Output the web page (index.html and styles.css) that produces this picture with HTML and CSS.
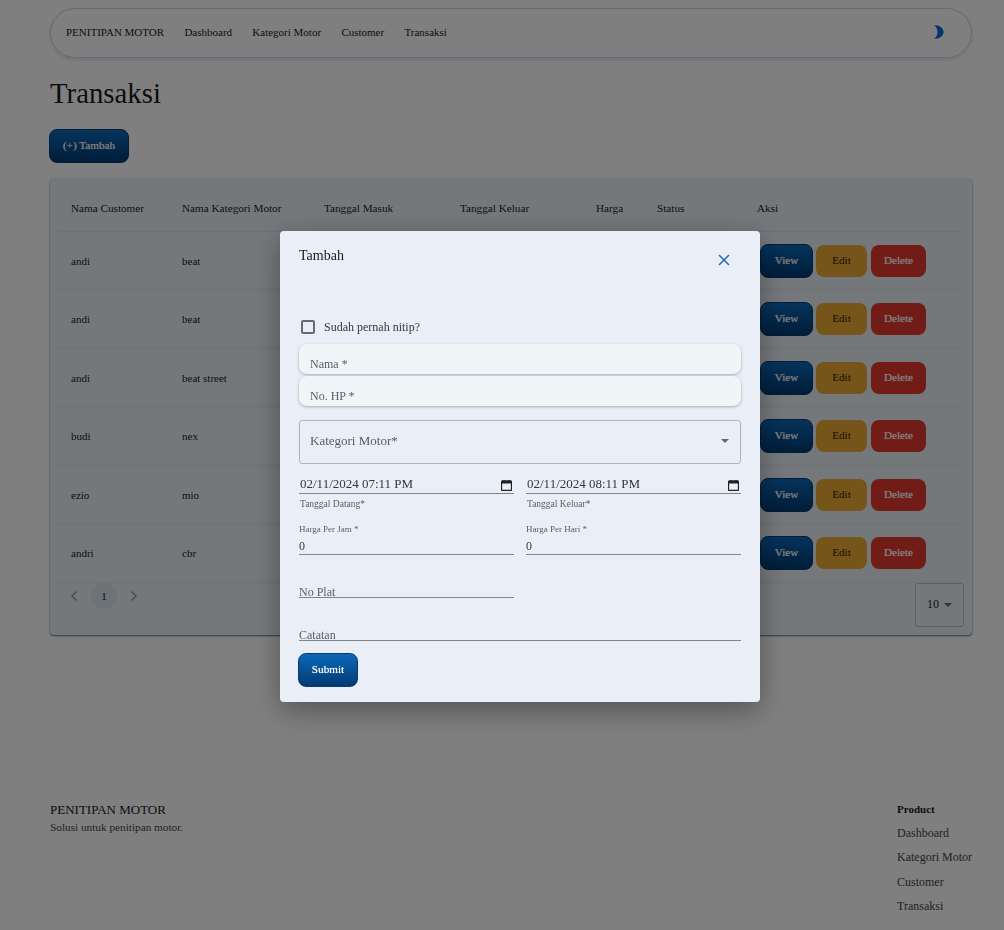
FILE: index.html
```html
<!DOCTYPE html>
<html lang="id">
<head>
    <meta charset="UTF-8">
    <meta name="viewport" content="width=device-width, initial-scale=1.0">
    <link rel="stylesheet" href="styles.css">
    <title>Transaksi</title>
</head>
<body>
    <div class="page">
        <nav class="navbar">
            <a class="nav-link">PENITIPAN MOTOR</a>
            <a class="nav-link">Dashboard</a>
            <a class="nav-link">Kategori Motor</a>
            <a class="nav-link">Customer</a>
            <a class="nav-link">Transaksi</a>
            <svg class="moon" width="10" height="14" viewBox="0 0 10 14"><path d="M0 0C5.500 0 9.500 3 9.500 7S5.500 14 0 14C2.500 12 3.500 9.500 3.500 7S2.500 2 0 0Z"/></svg>
        </nav>

        <h1 class="page-title">Transaksi</h1>
        <button class="btn btn-blue btn-tambah">(+) Tambah</button>

        <section class="table-card">
            <table class="data-table">
                <colgroup>
                    <col class="col-customer">
                    <col class="col-kategori">
                    <col class="col-masuk">
                    <col class="col-keluar">
                    <col class="col-harga">
                    <col class="col-status">
                    <col class="col-aksi">
                </colgroup>
                <thead>
                    <tr>
                        <th>Nama Customer</th>
                        <th>Nama Kategori Motor</th>
                        <th>Tanggal Masuk</th>
                        <th>Tanggal Keluar</th>
                        <th>Harga</th>
                        <th>Status</th>
                        <th>Aksi</th>
                    </tr>
                </thead>
                <tbody>
                    <tr>
                        <td>andi</td><td>beat</td><td></td><td></td><td></td><td></td>
                        <td><div class="actions"><button class="btn btn-blue btn-view">View</button><button class="btn btn-edit">Edit</button><button class="btn btn-delete">Delete</button></div></td>
                    </tr>
                    <tr>
                        <td>andi</td><td>beat</td><td></td><td></td><td></td><td></td>
                        <td><div class="actions"><button class="btn btn-blue btn-view">View</button><button class="btn btn-edit">Edit</button><button class="btn btn-delete">Delete</button></div></td>
                    </tr>
                    <tr>
                        <td>andi</td><td>beat street</td><td></td><td></td><td></td><td></td>
                        <td><div class="actions"><button class="btn btn-blue btn-view">View</button><button class="btn btn-edit">Edit</button><button class="btn btn-delete">Delete</button></div></td>
                    </tr>
                    <tr>
                        <td>budi</td><td>nex</td><td></td><td></td><td></td><td></td>
                        <td><div class="actions"><button class="btn btn-blue btn-view">View</button><button class="btn btn-edit">Edit</button><button class="btn btn-delete">Delete</button></div></td>
                    </tr>
                    <tr>
                        <td>ezio</td><td>mio</td><td></td><td></td><td></td><td></td>
                        <td><div class="actions"><button class="btn btn-blue btn-view">View</button><button class="btn btn-edit">Edit</button><button class="btn btn-delete">Delete</button></div></td>
                    </tr>
                    <tr>
                        <td>andri</td><td>cbr</td><td></td><td></td><td></td><td></td>
                        <td><div class="actions"><button class="btn btn-blue btn-view">View</button><button class="btn btn-edit">Edit</button><button class="btn btn-delete">Delete</button></div></td>
                    </tr>
                </tbody>
            </table>
            <div class="table-footer">
                <div class="pagination">
                    <svg class="chevron" width="8" height="12" viewBox="0 0 8 12"><path d="M6.500 1.500 2 6l4.500 4.500"/></svg>
                    <span class="page-num">1</span>
                    <svg class="chevron" width="8" height="12" viewBox="0 0 8 12"><path d="M1.500 1.500 6 6l-4.500 4.500"/></svg>
                </div>
                <div class="per-page">10 <span class="caret"></span></div>
            </div>
        </section>

        <footer class="footer">
            <div>
                <div class="footer-brand">PENITIPAN MOTOR</div>
                <div class="footer-desc">Solusi untuk penitipan motor.</div>
            </div>
            <div class="footer-links">
                <strong class="footer-head">Product</strong>
                <a>Dashboard</a>
                <a>Kategori Motor</a>
                <a>Customer</a>
                <a>Transaksi</a>
            </div>
        </footer>
    </div>

    <div class="backdrop"></div>

    <div class="modal">
        <div class="modal-head">
            <h2 class="modal-title">Tambah</h2>
            <svg class="close" width="14" height="14" viewBox="0 0 14 14"><path d="M2 2l10 10M12 2 2 12"/></svg>
        </div>

        <label class="check-row"><span class="check-box"></span>Sudah pernah nitip?</label>

        <div class="soft-field">Nama *</div>
        <div class="soft-field">No. HP *</div>

        <div class="select-field">Kategori Motor*<span class="caret"></span></div>

        <div class="form-grid">
            <div>
                <div class="date-input">02/11/2024 07:11 PM
                    <svg class="calendar" width="11" height="11" viewBox="0 0 11 11"><rect class="calendar-top" x="1" y="1" width="9" height="2.500"/><path d="M3 0v1.500M8 0v1.500M1.500 1h8a1 1 0 0 1 1 1v7.500a1 1 0 0 1-1 1h-8a1 1 0 0 1-1-1V2a1 1 0 0 1 1-1Z"/></svg>
                </div>
                <div class="hint">Tanggal Datang*</div>
            </div>
            <div>
                <div class="date-input">02/11/2024 08:11 PM
                    <svg class="calendar" width="11" height="11" viewBox="0 0 11 11"><rect class="calendar-top" x="1" y="1" width="9" height="2.500"/><path d="M3 0v1.500M8 0v1.500M1.500 1h8a1 1 0 0 1 1 1v7.500a1 1 0 0 1-1 1h-8a1 1 0 0 1-1-1V2a1 1 0 0 1 1-1Z"/></svg>
                </div>
                <div class="hint">Tanggal Keluar*</div>
            </div>
            <div class="money">
                <div class="money-label">Harga Per Jam *</div>
                <div class="money-value">0</div>
            </div>
            <div class="money">
                <div class="money-label">Harga Per Hari *</div>
                <div class="money-value">0</div>
            </div>
            <div class="line-field">No Plat</div>
            <div class="line-field line-wide">Catatan</div>
        </div>

        <button class="btn btn-blue btn-submit">Submit</button>
    </div>
</body>
</html>
```

FILE: styles.css
```css
* {
    box-sizing: border-box;
}

html, body {
    height: 930px;
    overflow: hidden;
}

body {
    margin: 0;
    background-color: #ffffff;
    color: #171a1c;
    font-family: "Liberation Serif", "Times New Roman", serif;
    font-size: 12px;
}

.page {
    padding: 8px 32px 0 50px;
}

/* navbar */
.navbar {
    display: flex;
    align-items: center;
    gap: 20.300px;
    height: 50px;
    padding: 0 27px 2px 15px;
    border: 1px solid #c5d4e6;
    border-radius: 25px;
    box-shadow: 0 2px 4px rgba(80, 120, 170, 0.2);
    font-size: 11px;
}

.moon {
    margin-left: auto;
    fill: #0a6cd6;
}

.page-title {
    margin: 19px 0 0;
    font-size: 28.800px;
    font-weight: 400;
    line-height: 32px;
}

/* botoes */
.btn {
    padding: 0 0 2px;
    border: 0;
    border-radius: 8px;
    font-family: inherit;
    font-size: 11.200px;
    font-weight: 400;
    cursor: pointer;
}

.btn-blue {
    height: 34px;
    background-image: linear-gradient(to bottom, #0b68b8, #023a72);
    border: 1px solid #0a3a70;
    color: #ffffff;
    text-shadow: 0 0 1px rgba(255, 255, 255, 0.7);
}

.btn-tambah {
    display: block;
    width: 80px;
    margin: 20px 0 15px -1px;
}

.btn-view {
    width: 53px;
}

.btn-edit {
    width: 51px;
    height: 32px;
    background-color: #ecaa34;
    color: #2a2008;
}

.btn-delete {
    width: 55px;
    height: 32px;
    margin-left: 1px;
    background-color: #e4392f;
    color: #ffffff;
    text-shadow: 0 0 1px rgba(255, 255, 255, 0.7);
}

/* tabela */
.table-card {
    height: 457px;
    padding: 0 8px;
    background-color: #ebf1f6;
    border-radius: 4px;
    box-shadow: 0 1px 2px rgba(0, 0, 0, 0.6);
}

.data-table {
    width: 100%;
    border-collapse: collapse;
    table-layout: fixed;
}

.col-customer { width: 111px; }
.col-kategori { width: 142px; }
.col-masuk { width: 136px; }
.col-keluar { width: 136px; }
.col-harga { width: 61px; }
.col-status { width: 100px; }

.data-table th {
    height: 53px;
    padding: 8px 13px 0;
    font-size: 11.200px;
    font-weight: 400;
    text-align: left;
    border-bottom: 1px solid #dde4ea;
}

.data-table td {
    height: 58.500px;
    padding: 1px 13px 0;
    font-size: 11px;
    border-bottom: 1px solid #dde4ea;
}

.actions {
    display: flex;
    align-items: center;
    gap: 3px;
    margin-left: 3px;
}

.table-footer {
    display: flex;
    justify-content: space-between;
    align-items: flex-start;
}

.pagination {
    display: flex;
    align-items: center;
    gap: 13px;
    padding-left: 12px;
}

.chevron {
    fill: none;
    stroke: #8d98a3;
    stroke-width: 1.500;
}

.page-num {
    width: 26px;
    height: 26px;
    border-radius: 50%;
    background-color: #dde6f0;
    font-size: 11px;
    line-height: 26px;
    text-align: center;
}

.per-page {
    display: flex;
    align-items: center;
    justify-content: center;
    gap: 5px;
    width: 49px;
    height: 44px;
    border: 1px solid #b9c0c6;
    border-radius: 3px;
}

.caret {
    width: 0;
    height: 0;
    border-left: 4px solid transparent;
    border-right: 4px solid transparent;
    border-top: 4px solid #606a74;
}

/* rodape */
.footer {
    display: flex;
    justify-content: space-between;
    margin-top: 167px;
}

.footer-brand {
    font-size: 13px;
    line-height: 15px;
}

.footer-desc {
    margin-top: 4px;
    color: #3d444b;
    font-size: 11.250px;
}

.footer-links {
    display: flex;
    flex-direction: column;
    gap: 8.500px;
    color: #3d444b;
    font-size: 12px;
    line-height: 16px;
}

.footer-head {
    color: #171a1c;
    font-size: 11px;
    line-height: 14px;
}

/* modal */
.backdrop {
    position: fixed;
    inset: 0;
    background-color: rgba(0, 0, 0, 0.5);
}

.modal {
    position: fixed;
    left: 280px;
    top: 231px;
    width: 480px;
    height: 471px;
    padding: 17px 19px 0;
    background-color: #eaeff7;
    border-radius: 4px;
    box-shadow: 0 8px 28px rgba(0, 0, 0, 0.35);
}

.modal-head {
    display: flex;
    justify-content: space-between;
    height: 72px;
}

.modal-title {
    margin: 0;
    font-size: 14px;
    font-weight: 400;
    line-height: 16px;
}

.close {
    margin: 5px 10px 0 0;
    fill: none;
    stroke: #1a6bbd;
    stroke-width: 1.500;
}

.check-row {
    display: flex;
    align-items: center;
    gap: 9px;
    height: 14px;
    margin-left: 2px;
    color: #32383e;
}

.check-box {
    width: 14px;
    height: 14px;
    border: 2px solid #636b74;
    border-radius: 2px;
}

.soft-field {
    height: 30px;
    margin-top: 2px;
    padding: 13px 11px 0;
    background-color: #f0f5f8;
    border-radius: 8px;
    box-shadow: 0 1px 3px rgba(90, 110, 140, 0.5);
    color: #555e68;
    line-height: 14px;
}

.check-row + .soft-field {
    margin-top: 10px;
}

.select-field {
    display: flex;
    justify-content: space-between;
    align-items: center;
    height: 44px;
    margin-top: 14px;
    padding: 0 11px 2px 10px;
    border: 1px solid #b0b4b8;
    border-radius: 3px;
    color: #555e68;
    font-size: 13px;
}

.form-grid {
    display: grid;
    grid-template-columns: 215px 215px;
    column-gap: 12px;
    margin-top: 11px;
}

.date-input {
    display: flex;
    justify-content: space-between;
    align-items: center;
    height: 19px;
    padding: 0 2px 0 1px;
    border-bottom: 1px solid #7d848b;
    color: #32383e;
    font-size: 13px;
}

.calendar {
    margin-top: 2px;
    fill: none;
    stroke: #222222;
    stroke-width: 1.300;
}

.calendar-top {
    fill: #222222;
    stroke: none;
}

.hint {
    margin-top: 4px;
    padding-left: 1px;
    color: #555e68;
    font-size: 9.500px;
    line-height: 12px;
}

.money {
    margin-top: 13px;
}

.money-label {
    color: #555e68;
    font-size: 9px;
    line-height: 12px;
}

.money-value {
    height: 20px;
    padding-top: 4px;
    border-bottom: 1px solid #7d848b;
    color: #32383e;
    line-height: 14px;
}

.line-field {
    grid-column: 1;
    height: 17px;
    margin-top: 26px;
    border-bottom: 1px solid #7d848b;
    color: #555e68;
    line-height: 22px;
}

.line-wide {
    grid-column: 1 / 3;
}

.btn-submit {
    display: block;
    width: 60px;
    margin: 12px 0 0 -1px;
}
```
